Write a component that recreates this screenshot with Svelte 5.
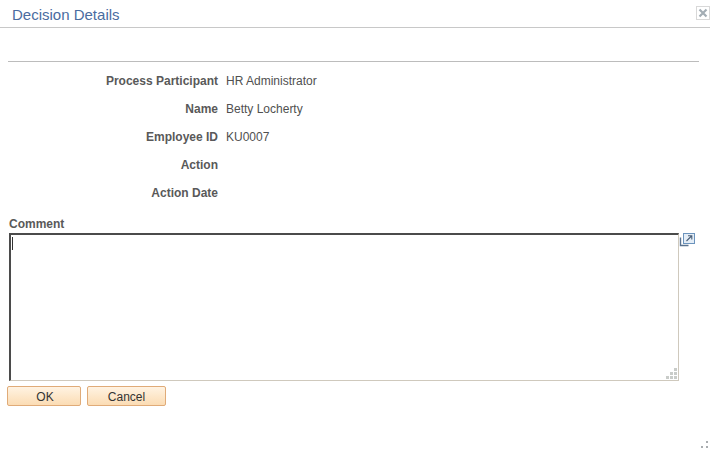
<script>
  const rows = [
    ['Process Participant', 'HR Administrator'],
    ['Name', 'Betty Locherty'],
    ['Employee ID', 'KU0007'],
    ['Action', ''],
    ['Action Date', '']
  ];
</script>

<div class="page">
  <header class="head">
    <h1>Decision Details</h1>
    <button class="close" aria-label="Close">
      <svg width="10" height="10" viewBox="0 0 10 10"><path d="M1.5 1.5l7 7M8.5 1.5l-7 7" stroke="#a3adb4" stroke-width="2.2" fill="none"/></svg>
    </button>
  </header>
  <div class="rule"></div>
  <div class="rows">
    {#each rows as [label, value]}
      <div class="row"><span class="label">{label}</span><span class="value">{value}</span></div>
    {/each}
  </div>
  <div class="comment-label">Comment</div>
  <div class="comment-row">
    <div class="area">
      <span class="caret"></span>
      <svg class="grip" width="11" height="11" viewBox="0 0 11 11" fill="#c9ccc9"><rect x="8" y="0" width="3" height="3"/><rect x="4" y="4" width="3" height="3"/><rect x="8" y="4" width="3" height="3"/><rect x="0" y="8" width="3" height="3"/><rect x="4" y="8" width="3" height="3"/><rect x="8" y="8" width="3" height="3"/></svg>
    </div>
    <svg class="expand" width="16" height="14" viewBox="0 0 16 14">
      <path d="M1.5 4.5v8h8" fill="none" stroke="#5a7390" stroke-width="1.4"/>
      <rect x="4.5" y="0.5" width="11" height="10" fill="#e4edf6" stroke="#6c94bd"/>
      <path d="M7.5 8l5-5M9 2.8h3.8v3.8" fill="none" stroke="#4a5f78" stroke-width="1.1"/>
    </svg>
  </div>
  <div class="buttons">
    <button class="btn ok">OK</button>
    <button class="btn cancel">Cancel</button>
  </div>
  <svg class="corner" width="7" height="7" viewBox="0 0 7 7" fill="#a9adb0"><rect x="5" y="0" width="2" height="2"/><rect x="0" y="5" width="2" height="2"/><rect x="5" y="5" width="2" height="2"/></svg>
</div>

<style>
  :global(body) { margin: 0; background: #fff; }
  .page {
    position: relative;
    width: 710px;
    height: 451px;
    overflow: hidden;
    font-family: "Liberation Sans", Arial, sans-serif;
    font-size: 12px;
    color: #4d4d4d;
  }
  .head {
    height: 27px;
    border-bottom: 1px solid #c8c8c8;
    display: flex;
    align-items: center;
    justify-content: space-between;
    padding-left: 12px;
  }
  h1 {
    margin: 0;
    font-size: 15px;
    font-weight: normal;
    color: #4a6c9f;
    line-height: 27px;
    padding-top: 1px;
    height: 26px;
  }
  .close {
    width: 14px;
    height: 14px;
    padding: 0;
    margin-bottom: 2px;
    background: #fff;
    border: 1px solid #d8d8d8;
    display: flex;
    align-items: center;
    justify-content: center;
  }
  .rule {
    height: 1px;
    background: #bcbcbc;
    margin: 33px 11px 0 8px;
  }
  .rows { margin-top: 5px; }
  .row {
    display: flex;
    height: 28px;
    align-items: center;
    line-height: 14px;
  }
  .label {
    width: 218px;
    text-align: right;
    font-weight: bold;
    color: #595959;
    flex: none;
  }
  .value { margin-left: 8px; color: #505050; }
  .comment-label {
    margin: 10px 0 0 9px;
    font-weight: bold;
    color: #595959;
    line-height: 14px;
    height: 16px;
  }
  .comment-row {
    display: flex;
    align-items: flex-start;
    margin-left: 9px;
  }
  .area {
    position: relative;
    width: 667px;
    height: 145px;
    border-style: solid;
    border-width: 2px 1px 1px 2px;
    border-color: #4b4b4b #cfc9bd #cfc9bd #4b4b4b;
    background: #fff;
    flex: none;
  }
  .caret {
    position: absolute;
    left: 1px;
    top: 2px;
    width: 1px;
    height: 13px;
    background: #333;
  }
  .grip { position: absolute; right: 1px; bottom: 1px; }
  .expand { flex: none; }
  .buttons {
    display: flex;
    gap: 6px;
    margin: 5px 0 0 7px;
  }
  .btn {
    height: 20px;
    padding: 2px 0 0;
    font-family: inherit;
    font-size: 12px;
    color: #333;
    border: 1px solid #e0ab78;
    border-radius: 2px;
    background: linear-gradient(#fff3e2, #fbdcb4);
  }
  .ok { width: 74px; padding-left: 2px; }
  .cancel { width: 79px; }
  .corner { position: absolute; left: 701px; bottom: 3px; }
</style>
